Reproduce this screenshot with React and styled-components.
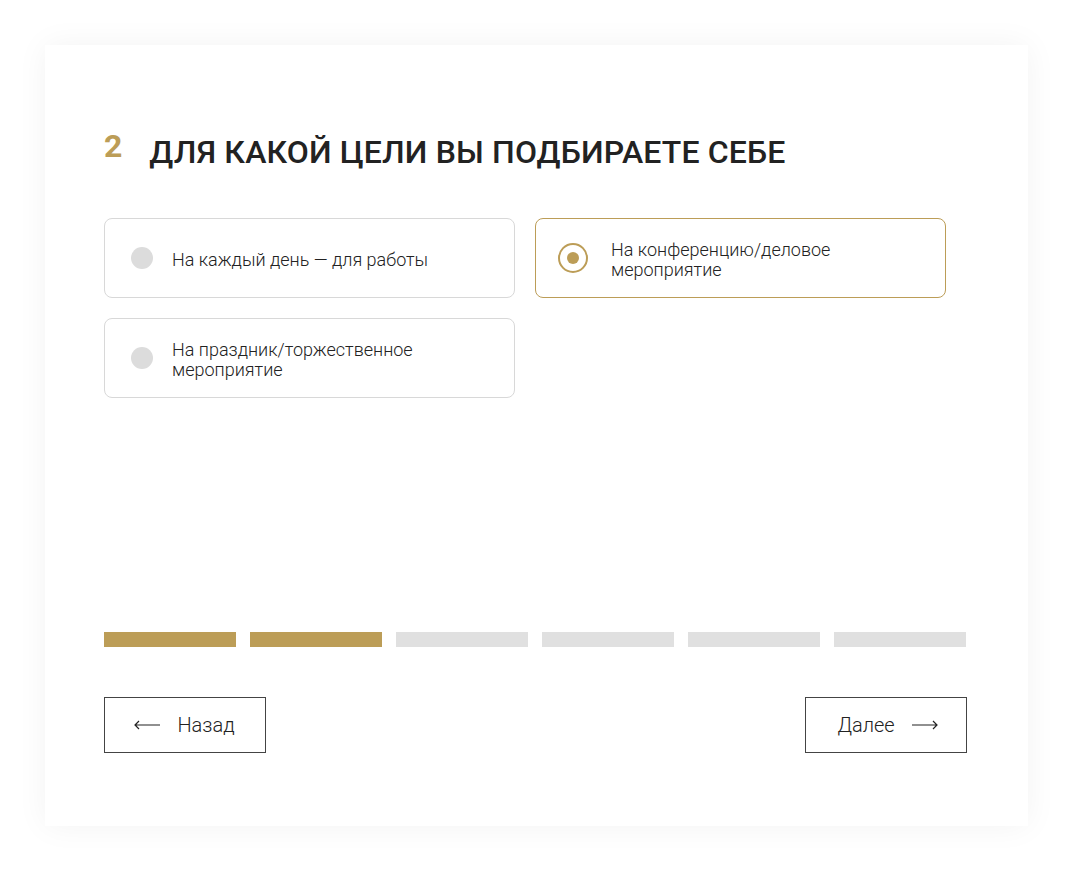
import React, { useState } from 'react';
import styled, { createGlobalStyle } from 'styled-components';

const GlobalStyle = createGlobalStyle`
  html, body {
    margin: 0;
    padding: 0;
    background: #ffffff;
    font-family: Roboto, "Liberation Sans", Arial, sans-serif;
  }
  * { box-sizing: border-box; }
`;

const GOLD = '#bc9d57';

const options = [
  'На каждый день — для работы',
  'На конференцию/деловое мероприятие',
  'На праздник/торжественное мероприятие',
];

const Page = () => {
  const [selected, setSelected] = useState(1);
  const step = 2;
  const total = 6;

  return (
    <Wrapper>
      <GlobalStyle />
      <Card>
        <Title>
          <Num>2</Num>
          <Question>ДЛЯ КАКОЙ ЦЕЛИ ВЫ ПОДБИРАЕТЕ СЕБЕ</Question>
        </Title>

        <Options>
          {options.map((text, i) => (
            <Option key={text} active={i === selected} onClick={() => setSelected(i)}>
              <Radio active={i === selected} />
              <OptionText active={i === selected}>{text}</OptionText>
            </Option>
          ))}
        </Options>

        <Progress>
          {Array.from({ length: total }).map((_, i) => (
            <Bar key={i} done={i < step} />
          ))}
        </Progress>

        <Nav>
          <NavButton>
            <Arrow viewBox="0 0 28 12">
              <path d="M27 6H2M6 2L2 6l4 4" />
            </Arrow>
            Назад
          </NavButton>
          <NavButton right>
            Далее
            <Arrow viewBox="0 0 28 12">
              <path d="M1 6h25M22 2l4 4-4 4" />
            </Arrow>
          </NavButton>
        </Nav>
      </Card>
    </Wrapper>
  );
};

const Wrapper = styled.div`
  padding: 45px 46px 46px 45px;
`;

const Card = styled.div`
  width: 983px;
  height: 781px;
  background: #fff;
  box-shadow: 0 0 30px rgba(0, 0, 0, 0.05);
  padding: 83px 62px 0 59px;
  display: flex;
  flex-direction: column;
`;

const Title = styled.div`
  display: flex;
  align-items: flex-start;
  gap: 27px;
  margin-bottom: 47px;
`;

const Num = styled.span`
  margin-top: 2px;
  color: ${GOLD};
  font-size: 32px;
  font-weight: 700;
  line-height: 32px;
`;

const Question = styled.h2`
  margin: 5px 0 0;
  font-size: 32px;
  font-weight: 500;
  letter-spacing: 0.15px;
  line-height: 38px;
  color: #222;
`;

const Options = styled.div`
  display: grid;
  grid-template-columns: 411px 411px;
  column-gap: 20px;
  row-gap: 20px;
  height: 414px;
  align-content: start;
`;

const Option = styled.div`
  height: 80px;
  border: 1px solid ${(p) => (p.active ? GOLD : '#d8d8d8')};
  border-radius: 8px;
  display: flex;
  align-items: center;
  padding: 0 26px;
  cursor: pointer;
`;

const Radio = styled.span`
  flex: none;
  width: ${(p) => (p.active ? '30px' : '22px')};
  height: ${(p) => (p.active ? '30px' : '22px')};
  margin: ${(p) => (p.active ? '0 -4px 0 -4px' : '0')};
  border-radius: 50%;
  background: ${(p) => (p.active ? '#fff' : '#dcdcdc')};
  border: ${(p) => (p.active ? `2px solid ${GOLD}` : 'none')};
  display: flex;
  align-items: center;
  justify-content: center;
  &::after {
    content: '';
    display: ${(p) => (p.active ? 'block' : 'none')};
    width: 12px;
    height: 12px;
    border-radius: 50%;
    background: ${GOLD};
  }
`;

const OptionText = styled.span`
  margin: 3px 0 0 ${(p) => (p.active ? '27px' : '19px')};
  font-size: 18px;
  font-weight: 300;
  line-height: 20px;
  color: #222;
  max-width: 280px;
`;

const Progress = styled.div`
  display: grid;
  grid-template-columns: repeat(6, 1fr);
  column-gap: 14px;
  margin-bottom: 50px;
`;

const Bar = styled.div`
  height: 15px;
  background: ${(p) => (p.done ? GOLD : '#e0e0e0')};
`;

const Nav = styled.div`
  display: flex;
  justify-content: space-between;
  align-items: center;
`;

const NavButton = styled.button`
  width: 162px;
  height: 56px;
  margin-right: ${(p) => (p.right ? '-1px' : '0')};
  background: #fff;
  border: 1px solid #444;
  display: flex;
  align-items: center;
  justify-content: center;
  gap: 16px;
  padding: ${(p) => (p.right ? '0 0 0 4px' : '0 2px 0 0')};
  font-family: Roboto, "Liberation Sans", Arial, sans-serif;
  font-size: 20px;
  font-weight: 300;
  color: #222;
  cursor: pointer;
`;

const Arrow = styled.svg`
  width: 28px;
  height: 12px;
  fill: none;
  stroke: #222;
  stroke-width: 1.2;
`;

export default Page;
